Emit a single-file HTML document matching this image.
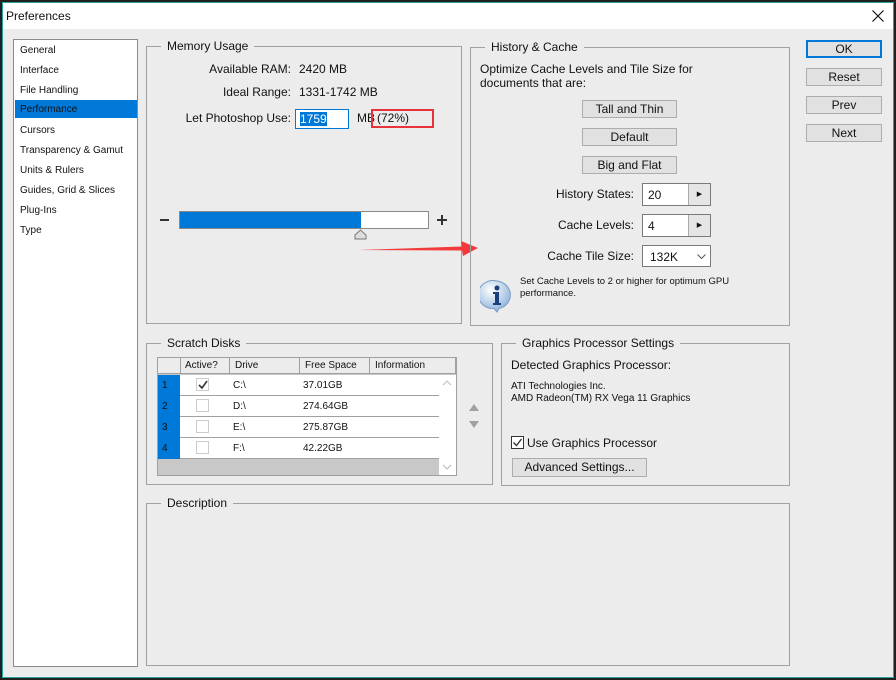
<!DOCTYPE html>
<html><head><meta charset="utf-8"><style>
*{box-sizing:border-box;margin:0;padding:0}
body{width:896px;height:680px;background:#202020;font-family:"Liberation Sans",sans-serif;font-size:12px;color:#111;position:relative;overflow:hidden}
.a{position:absolute}
#win{position:absolute;left:2px;top:2px;width:892px;height:676px;border:1px solid #2aa59a;background:#ececec}
#tb{position:absolute;left:3px;top:3px;width:890px;height:26px;background:#fff}
.grp{position:absolute;border:1px solid #a0a0a0}
.gt{position:absolute;top:-8px;left:14px;background:#ececec;padding:0 6px;font-size:12px;line-height:14px}
.btn{position:absolute;background:#e1e1e1;border:1px solid #adadad;text-align:center;font-size:12px;line-height:16px}
.li{position:absolute;left:1px;width:122px;height:18px;padding-left:5px;font-size:10px;line-height:18px}
.r{text-align:right}
.in{position:absolute;background:#fff;border:1px solid #7a7a7a}
.td{position:absolute;font-size:10px}
</style></head><body>
<div id="win"></div>
<div id="tb"></div>
<div class="a" style="left:6px;top:9px;font-size:12px">Preferences</div>
<svg class="a" style="left:872px;top:10px" width="12" height="12"><path d="M0.5 0.5L11.5 11.5M11.5 0.5L0.5 11.5" stroke="#111" stroke-width="1.2"/></svg>

<!-- left list -->
<div class="a" style="left:13px;top:39px;width:125px;height:628px;background:#fff;border:1px solid #8a8a8a">
<div class="li" style="top:1px;line-height:20px">General</div>
<div class="li" style="top:21px;line-height:20px">Interface</div>
<div class="li" style="top:41px;line-height:20px">File Handling</div>
<div class="li" style="top:60px;background:#0078d7;line-height:20px">Performance</div>
<div class="li" style="top:81px;line-height:20px">Cursors</div>
<div class="li" style="top:101px;line-height:20px">Transparency &amp; Gamut</div>
<div class="li" style="top:121px;line-height:20px">Units &amp; Rulers</div>
<div class="li" style="top:141px;line-height:20px">Guides, Grid &amp; Slices</div>
<div class="li" style="top:161px;line-height:20px">Plug-Ins</div>
<div class="li" style="top:181px;line-height:20px">Type</div>
</div>

<!-- memory -->
<div class="grp" style="left:146px;top:46px;width:316px;height:278px"><div class="gt">Memory Usage</div></div>
<div class="a r" style="left:150px;top:62px;width:141px">Available RAM:</div>
<div class="a" style="left:299px;top:62px">2420 MB</div>
<div class="a r" style="left:150px;top:85px;width:141px">Ideal Range:</div>
<div class="a" style="left:299px;top:85px">1331-1742 MB</div>
<div class="a r" style="left:150px;top:111px;width:141px">Let Photoshop Use:</div>
<div class="a" style="left:295px;top:109px;width:54px;height:20px;background:#fff;border:1px solid #0078d7"><span style="position:absolute;left:4px;top:2px;background:#0078d7;color:#fff;line-height:14px;font-size:12px">1759</span></div>
<div class="a" style="left:357px;top:111px">MB</div>
<div class="a" style="left:371px;top:109px;width:63px;height:19px;border:2px solid #e8333a"></div>
<div class="a" style="left:377px;top:111px">(72%)</div>
<div class="a" style="left:160px;top:219px;width:9px;height:2px;background:#333"></div>
<div class="a" style="left:179px;top:211px;width:250px;height:18px;background:#fff;border:1px solid #8a8a8a"><div style="width:181px;height:16px;background:#0078d7"></div></div>
<div class="a" style="left:437px;top:219px;width:10px;height:2px;background:#333"></div>
<div class="a" style="left:441px;top:215px;width:2px;height:10px;background:#333"></div>
<svg class="a" style="left:354px;top:229px" width="13" height="11"><path d="M1 10V6L6.5 1L12 6V10Z" fill="#ddd" stroke="#777"/></svg>
<svg class="a" style="left:356px;top:238px" width="124" height="20"><path d="M2 12L106 8.5L105 3L122 10L107 18L106 12.5Z" fill="#f23a3a"/></svg>

<!-- history -->
<div class="grp" style="left:470px;top:47px;width:320px;height:279px"><div class="gt">History &amp; Cache</div></div>
<div class="a" style="left:480px;top:62px;line-height:14px">Optimize Cache Levels and Tile Size for<br>documents that are:</div>
<div class="btn" style="left:582px;top:100px;width:95px;height:18px">Tall and Thin</div>
<div class="btn" style="left:582px;top:128px;width:95px;height:18px">Default</div>
<div class="btn" style="left:582px;top:156px;width:95px;height:18px">Big and Flat</div>
<div class="a r" style="left:500px;top:187px;width:134px">History States:</div>
<div class="in" style="left:642px;top:183px;width:69px;height:23px"><span style="position:absolute;left:5px;top:4px">20</span><div style="position:absolute;left:45px;top:0;width:22px;height:21px;background:#e5e5e5;border-left:1px solid #aaa;font-size:7px;text-align:center;line-height:21px">▶</div></div>
<div class="a r" style="left:500px;top:218px;width:134px">Cache Levels:</div>
<div class="in" style="left:642px;top:214px;width:69px;height:23px"><span style="position:absolute;left:5px;top:4px">4</span><div style="position:absolute;left:45px;top:0;width:22px;height:21px;background:#e5e5e5;border-left:1px solid #aaa;font-size:7px;text-align:center;line-height:21px">▶</div></div>
<div class="a r" style="left:500px;top:249px;width:134px">Cache Tile Size:</div>
<div class="in" style="left:642px;top:245px;width:69px;height:22px"><span style="position:absolute;left:7px;top:4px">132K</span><svg style="position:absolute;left:54px;top:8px" width="9" height="6"><path d="M0.5 0.5L4.5 4.5L8.5 0.5" fill="none" stroke="#555"/></svg></div>
<svg class="a" style="left:480px;top:279px" width="34" height="34"><defs><radialGradient id="g" cx="40%" cy="30%" r="70%"><stop offset="0" stop-color="#fff"/><stop offset="1" stop-color="#8fb4dc"/></radialGradient></defs><path d="M17 2A15 14 0 1 0 14 29.5L17 33L19 29.5A15 14 0 0 0 17 2Z" fill="url(#g)" stroke="#7a9cc4"/><circle cx="17" cy="9" r="2.5" fill="#1b3f7a"/><path d="M13 13H19V24H21V26H13V24H15V15H13Z" fill="#1b3f7a"/></svg>
<div class="a" style="left:520px;top:276px;font-size:9.5px;line-height:12px">Set Cache Levels to 2 or higher for optimum GPU<br>performance.</div>

<!-- right buttons -->
<div class="btn" style="left:806px;top:40px;width:76px;height:18px;border:2px solid #0078d7;line-height:14px">OK</div>
<div class="btn" style="left:806px;top:68px;width:76px;height:18px">Reset</div>
<div class="btn" style="left:806px;top:96px;width:76px;height:18px">Prev</div>
<div class="btn" style="left:806px;top:124px;width:76px;height:18px">Next</div>

<!-- scratch -->
<div class="grp" style="left:146px;top:343px;width:347px;height:142px"><div class="gt">Scratch Disks</div></div>
<div class="a" style="left:157px;top:357px;width:300px;height:119px;border:1px solid #a0a0a0;background:#c8c8c8">
<div style="position:absolute;left:0;top:0;width:298px;height:16px;background:#ececec;border-bottom:1px solid #a0a0a0"></div>
<div style="position:absolute;left:0;top:17px;width:22px;height:84px;background:#0078d7"></div>
<div style="position:absolute;left:22px;top:17px;width:259px;height:84px;background:#fff"></div>
<div style="position:absolute;left:281px;top:17px;width:17px;height:100px;background:#fff"></div>
<div style="position:absolute;left:22px;top:37px;width:259px;height:1px;background:#a0a0a0"></div>
<div style="position:absolute;left:22px;top:58px;width:259px;height:1px;background:#a0a0a0"></div>
<div style="position:absolute;left:22px;top:79px;width:259px;height:1px;background:#a0a0a0"></div>
<div style="position:absolute;left:22px;top:100px;width:259px;height:1px;background:#a0a0a0"></div>
<div style="position:absolute;left:22px;top:0;width:1px;height:16px;background:#a0a0a0"></div>
<div style="position:absolute;left:71px;top:0;width:1px;height:16px;background:#a0a0a0"></div>
<div style="position:absolute;left:141px;top:0;width:1px;height:16px;background:#a0a0a0"></div>
<div style="position:absolute;left:211px;top:0;width:1px;height:16px;background:#a0a0a0"></div>
<div style="position:absolute;left:297px;top:0;width:1px;height:16px;background:#a0a0a0"></div>
</div>
<div class="td" style="left:185px;top:360px">Active?</div>
<div class="td" style="left:235px;top:360px">Drive</div>
<div class="td" style="left:305px;top:360px">Free Space</div>
<div class="td" style="left:375px;top:360px">Information</div>
<div class="td" style="left:162px;top:380px">1</div><div class="td" style="left:162px;top:401px">2</div><div class="td" style="left:162px;top:422px">3</div><div class="td" style="left:162px;top:443px">4</div>
<div class="a" style="left:196px;top:378px;width:13px;height:13px;border:1px solid #ccc"></div>
<svg class="a" style="left:197px;top:379px" width="12" height="12"><path d="M2 6L5 9L10 2" fill="none" stroke="#333" stroke-width="1.6"/></svg>
<div class="a" style="left:196px;top:399px;width:13px;height:13px;border:1px solid #ccc"></div>
<div class="a" style="left:196px;top:420px;width:13px;height:13px;border:1px solid #ccc"></div>
<div class="a" style="left:196px;top:441px;width:13px;height:13px;border:1px solid #ccc"></div>
<div class="td" style="left:233px;top:380px">C:\</div><div class="td" style="left:233px;top:401px">D:\</div><div class="td" style="left:233px;top:422px">E:\</div><div class="td" style="left:233px;top:443px">F:\</div>
<div class="td" style="left:303px;top:380px">37.01GB</div><div class="td" style="left:303px;top:401px">274.64GB</div><div class="td" style="left:303px;top:422px">275.87GB</div><div class="td" style="left:303px;top:443px">42.22GB</div>
<svg class="a" style="left:442px;top:380px" width="10" height="6"><path d="M1 5L5 1L9 5" fill="none" stroke="#bbb"/></svg>
<svg class="a" style="left:442px;top:464px" width="10" height="6"><path d="M1 1L5 5L9 1" fill="none" stroke="#bbb"/></svg>
<svg class="a" style="left:468px;top:402px" width="12" height="28"><path d="M1 9L6 2L11 9Z M1 19L6 26L11 19Z" fill="#a0a0a0"/></svg>

<!-- gpu -->
<div class="grp" style="left:501px;top:343px;width:289px;height:143px"><div class="gt">Graphics Processor Settings</div></div>
<div class="a" style="left:511px;top:358px">Detected Graphics Processor:</div>
<div class="a" style="left:511px;top:381px;font-size:10px;line-height:12px">ATI Technologies Inc.<br>AMD Radeon(TM) RX Vega 11 Graphics</div>
<div class="a" style="left:511px;top:436px;width:13px;height:13px;border:1px solid #333;background:#fff"></div>
<svg class="a" style="left:512px;top:437px" width="11" height="11"><path d="M1.5 5.5L4.5 8.5L9.5 2" fill="none" stroke="#333" stroke-width="1.4"/></svg>
<div class="a" style="left:527px;top:436px">Use Graphics Processor</div>
<div class="btn" style="left:512px;top:458px;width:135px;height:19px">Advanced Settings...</div>

<!-- description -->
<div class="grp" style="left:146px;top:503px;width:644px;height:163px"><div class="gt">Description</div></div>
</body></html>
